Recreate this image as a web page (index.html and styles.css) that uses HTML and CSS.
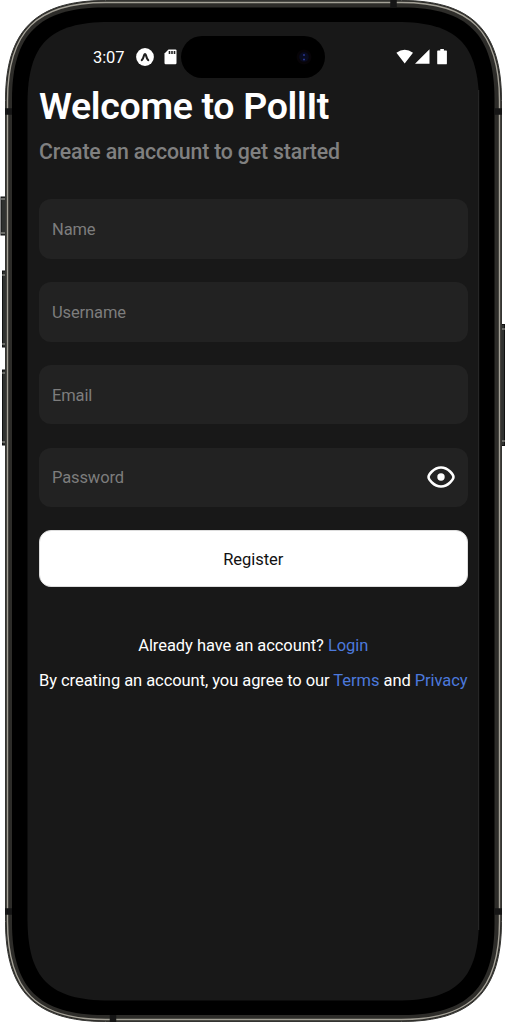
FILE: index.html
```html
<!DOCTYPE html>
<html lang="en">
<head>
<meta charset="utf-8">
<title>PollIt</title>
<link rel="stylesheet" href="styles.css">
</head>
<body>
<div class="phone">
  <svg class="shell" width="505" height="1023" viewBox="0 0 505 1023" aria-hidden="true">
    <g fill="#303230" stroke="#111" stroke-width="1">
      <rect x="1" y="197" width="6" height="38"/>
      <rect x="2.500" y="271" width="5" height="76"/>
      <rect x="2.500" y="370" width="5" height="75"/>
      <rect x="500.500" y="324.500" width="4" height="121"/>
    </g>
    <path d="M1 199h5M1 233h5M2 275h4M2 344h4M2 373h4M2 442h4M501 329h4M501 441h4" stroke="#aaa9a2" stroke-width="1"/>
    <path d="M5.500 100.500C5.500 30.500 35.500 .5 105.500 .5H401.500C471.500 .5 501.500 30.500 501.500 100.500V921.500C501.500 991.500 471.500 1021.500 401.500 1021.500H105.500C35.500 1021.500 5.500 991.500 5.500 921.500Z" fill="#2d2c29" stroke="#343431"/>
    <path d="M7.500 100.500C7.500 31.500 36.500 2.500 105.500 2.500H401.500C470.500 2.500 499.500 31.500 499.500 100.500V921.500C499.500 990.500 470.500 1019.500 401.500 1019.500H105.500C36.500 1019.500 7.500 990.500 7.500 921.500Z" fill="none" stroke="#a5a298" stroke-width="1.400"/>
    <path d="M12 99.500C12 34.500 39 7.500 104 7.500H402.500C467.500 7.500 494.500 34.500 494.500 99.500V923C494.500 988 467.500 1015 402.500 1015H104C39 1015 12 988 12 923Z" fill="#000"/>
    <path d="M5 111.500h7M5 911.500h7M494.500 111.500h7.500M494.500 911.500h7.500M393.500 0v7.500M113 1015v7" stroke="#151515" stroke-width="6.500"/>
    <path d="M27.500 104C27.500 44 49.500 22 109.500 22H397C457 22 479 44 479 104V918.500C479 978.500 457 1000.500 397 1000.500H109.500C49.500 1000.500 27.500 978.500 27.500 918.500Z" fill="#181818"/>
    <path d="M478.700 90V930" stroke="#303030" stroke-width=".8"/>
  </svg>
  <main class="screen">
    <header class="status">
      <span class="clock">3:07</span>
      <svg class="expo" width="18" height="18" viewBox="0 0 18 18"><circle cx="9" cy="9" r="8.900" fill="#fff"/><path d="M5.800 12.200Q7.200 10.500 8.100 7.200Q9 4.800 9.900 7.200Q10.800 10.500 12.200 12.200" fill="none" stroke="#202020" stroke-width="2.100" stroke-linecap="round"/></svg>
      <svg class="card" width="13" height="16" viewBox="0 0 13 16"><path d="M4.500 .5H11.500Q12.500 .5 12.500 1.500V14Q12.500 15.300 11.300 15.300H1.700Q.5 15.300 .5 14V4.600Z" fill="#fff"/><path d="M5.500 2v3M8 2v3M10.500 2v3" stroke="#222" stroke-width="1.600"/></svg>
      <div class="island"><svg width="16" height="16" viewBox="0 0 16 16"><circle cx="8" cy="8" r="7.500" fill="#070407"/><circle cx="8" cy="8" r="4.800" fill="#080b20"/><path d="M7 6h2M7 10.500h2" stroke="#28348c" stroke-width="1.700"/></svg></div>
      <svg class="signals" width="52" height="16" viewBox="0 0 52 16"><path d="M.4 3.700Q8.700 -2.200 17 3.700L8.700 14.500ZM33.500 .3V14.800H19ZM42 1.400h2.300V0h3.600v1.400h2.300q.7 0 .7.700V14.400q0 .9-.9.900h-7.900q-.9 0-.9-.9V2.100q0-.7.800-.7Z" fill="#fff"/></svg>
    </header>
    <h1 class="title">Welcome to PollIt</h1>
    <p class="subtitle">Create an account to get started</p>
    <form class="form">
      <label class="field"><input class="input" type="text" placeholder="Name"></label>
      <label class="field"><input class="input" type="text" placeholder="Username"></label>
      <label class="field"><input class="input" type="email" placeholder="Email"></label>
      <label class="field"><input class="input" type="password" placeholder="Password">
        <svg class="eye" width="28" height="22" viewBox="0 0 28 22"><path d="M1.500 11C1.500 9 6.500 1.500 14 1.500S26.500 9 26.500 11S21.500 20.500 14 20.500S1.500 13 1.500 11Z" fill="none" stroke="#fff" stroke-width="2.500"/><circle cx="14" cy="11" r="3.700" fill="#fff"/></svg>
      </label>
      <button class="register" type="button">Register</button>
    </form>
    <p class="login">Already have an account? <a class="link">Login</a></p>
    <p class="terms">By creating an account, you agree to our <a class="link">Terms</a> and <a class="link">Privacy</a></p>
  </main>
</div>
</body>
</html>
```
FILE: styles.css
```css
* { box-sizing: border-box; }
body { margin: 0; background: #fff; font-family: Roboto, sans-serif; color: #fff; overflow: hidden; }
.phone { display: grid; grid-template-columns: 505px; width: 505px; height: 1023px; }
.shell, .screen { grid-area: 1 / 1; }
.shell { display: block; }
.screen { display: flex; flex-direction: column; min-width: 0; padding: 36px 37.500px 0 39px; z-index: 1; }
.status { display: flex; align-items: center; height: 42px; padding-left: 54px; }
.status > * { flex-shrink: 0; }
.clock { width: 43px; font-size: 16.500px; line-height: 20px; padding-top: 2px; letter-spacing: -.1px; }
.card { margin-left: 10px; }
.island { display: flex; align-items: center; justify-content: flex-end; width: 144px; height: 42px; margin-left: 4px; padding-right: 13px; border-radius: 21px; background: #000; }
.signals { margin-left: 71px; }
.title { margin: 6px 0 0; font-size: 37.500px; line-height: 44px; font-weight: 600; letter-spacing: -.33px; white-space: nowrap; }
.subtitle { margin: 10px 0 0; color: #808080; font-size: 21.300px; line-height: 28px; font-weight: 500; letter-spacing: -.18px; white-space: nowrap; }
.form { display: flex; flex-direction: column; gap: 23.300px; margin-top: 33.300px; }
.field { display: flex; align-items: center; height: 59.500px; padding: 0 13px; border-radius: 12px; background: #222; }
.input { flex: 1; min-width: 0; padding: 2px 0 0; border: 0; outline: 0; background: none; color: #fff; font: 16.500px/20px Roboto, sans-serif; letter-spacing: -.12px; }
.input::placeholder { color: #7d7d7d; opacity: 1; }
.register { height: 56.500px; padding: 2px 0 0; border: 1px solid #ddd; border-radius: 12px; background: #fff; color: #111; font: 16.500px/20px Roboto, sans-serif; letter-spacing: -.06px; }
.login, .terms { margin: 0; font-size: 16.500px; line-height: 20px; letter-spacing: -.06px; text-align: center; white-space: nowrap; }
.login { margin-top: 49px; }
.terms { margin-top: 15px; }
.link { color: #4c79dc; }
```
